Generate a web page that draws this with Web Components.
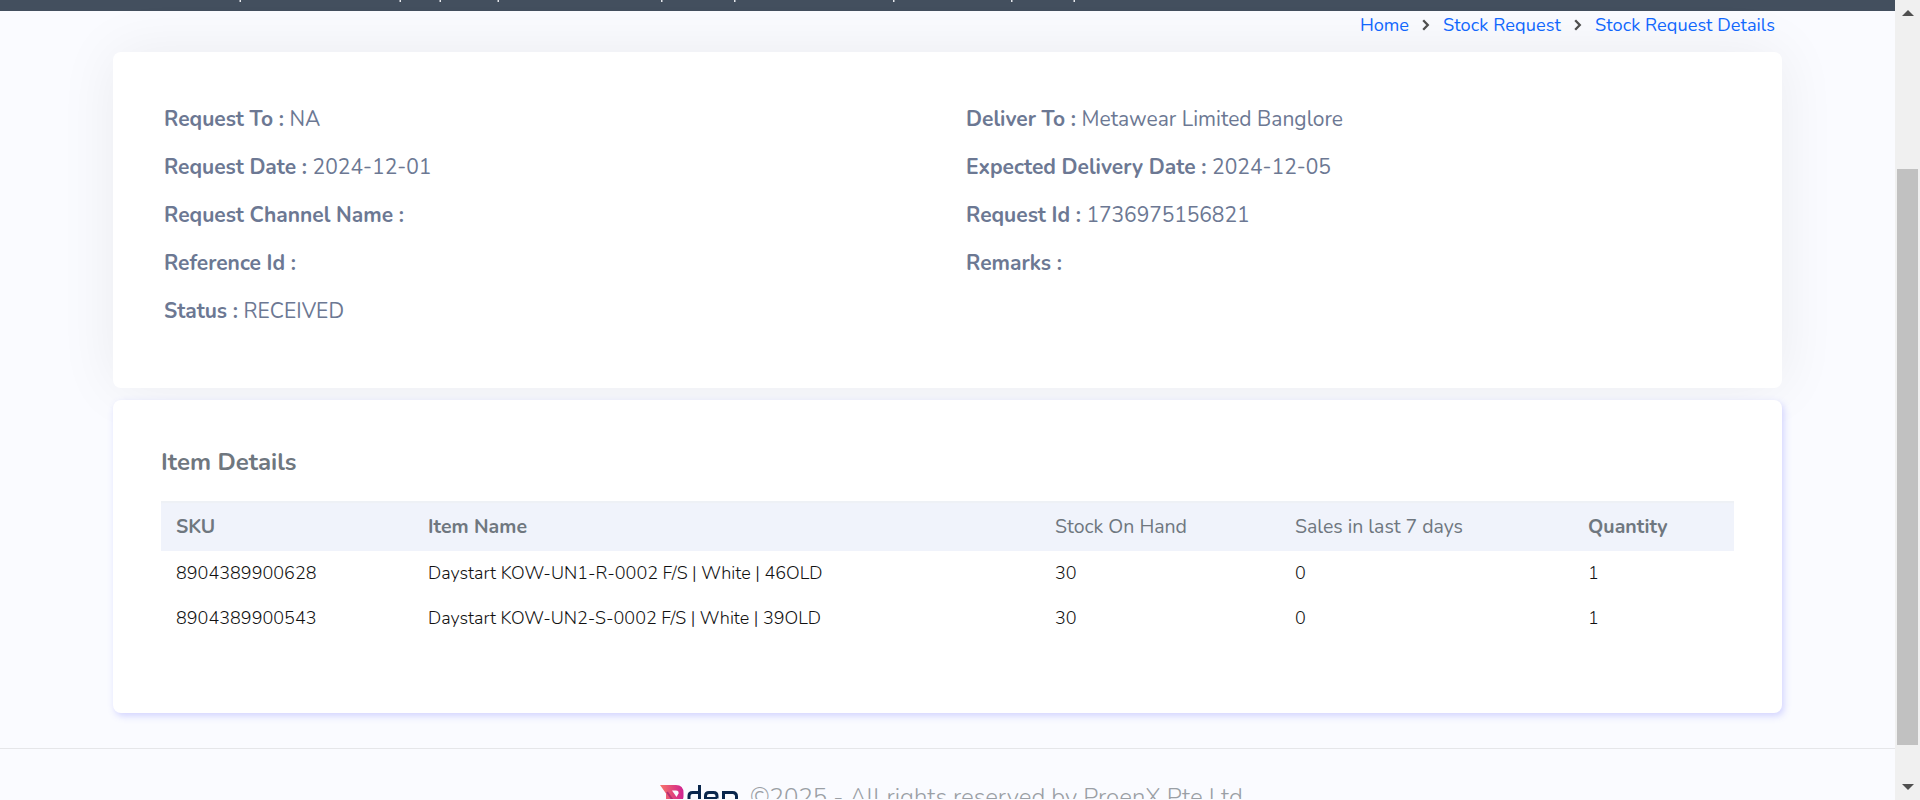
<!DOCTYPE html>
<html lang="en"><head><meta charset="utf-8"><title>Stock Request Details</title>
<style>
html,body{margin:0;height:100%;overflow:hidden}
body{font-family:Nunito,Lato,"Open Sans",sans-serif;background:#fafbff}
</style></head><body><stock-page></stock-page>
<script>
const define=(name,html,setup)=>customElements.define(name,class extends HTMLElement{
  connectedCallback(){
    if(this.shadowRoot)return;
    this.attachShadow({mode:'open'}).innerHTML=html;
    if(setup)setup(this,this.shadowRoot);
  }
});
// Single line of text tracked to occupy the width given in its "w" attribute.
define('fit-text','<style>:host{display:inline-block;white-space:pre}span{display:inline-block}</style><span><slot></slot></span>',(el,root)=>{
  const s=root.querySelector('span'),n=el.textContent.length,w=+el.getAttribute('w');
  if(w&&n>1){s.style.letterSpacing=((w-s.getBoundingClientRect().width)/n)+'px';}
});
define('nav-strip',`<style>:host{display:block;height:11px;background:#434f5e;flex:none}svg{display:block}</style>
<svg width="1895" height="11" fill="#e3e6ea"><path d="M239.500 0h1.500v2h-1.500zM399.500 0h1.500v2h-1.500zM439.500 0h1.500v2h-1.500zM497.500 0h1.500v2h-1.500zM661 0h1.500v2h-1.500zM734 0h1.500v2h-1.500zM893 0h1.500v2h-1.500zM1011 0h1.500v2h-1.500zM1073.500 0h1.500v2h-1.500z"/></svg>`);
define('bread-crumb',`<style>:host{display:flex;justify-content:flex-end;align-items:center;height:41px;box-sizing:border-box;padding:0 120px 13px 0;font-size:18.2px;line-height:22px;color:#1269ff;flex:none}
svg{display:block;margin:0 13px 0 13px}</style>
<fit-text w="49">Home</fit-text><svg width="8" height="12" fill="none" stroke="#505050" stroke-width="2.3"><path d="M1.200 1.200 5.800 6 1.200 10.800"/></svg><fit-text w="118">Stock Request</fit-text><svg width="8" height="12" fill="none" stroke="#505050" stroke-width="2.3"><path d="M1.200 1.200 5.800 6 1.200 10.800"/></svg><fit-text w="180">Stock Request Details</fit-text>`);
define('info-line',`<style>:host{display:flex;height:48px;line-height:48px;font-size:21px;font-weight:400;color:#6c7893;white-space:pre}b{font-weight:700}b{margin-right:5.5px}</style><b></b><span></span>`,(el,root)=>{
  const add=(sel,text,w)=>{const f=document.createElement('fit-text');f.setAttribute('w',w);f.textContent=text;root.querySelector(sel).append(f);};
  add('b',el.getAttribute('label')+' :',el.getAttribute('lw'));
  if(el.getAttribute('value'))add('span',el.getAttribute('value'),el.getAttribute('vw'));
});
define('info-card',`<style>:host{display:grid;grid-template-columns:802px 1fr;box-sizing:border-box;height:336px;margin:0 113px;padding:43px 51px 0;background:#fff;border-radius:8px;box-shadow:0 0 60px rgba(10,15,35,.065);flex:none}</style>
<div><info-line label="Request To" lw="120" value="NA" vw="31"></info-line>
<info-line label="Request Date" lw="143" value="2024-12-01" vw="119"></info-line>
<info-line label="Request Channel Name" lw="240"></info-line>
<info-line label="Reference Id" lw="132"></info-line>
<info-line label="Status" lw="74" value="RECEIVED" vw="100.5"></info-line></div>
<div><info-line label="Deliver To" lw="110" value="Metawear Limited Banglore" vw="261.500"></info-line>
<info-line label="Expected Delivery Date" lw="240.500" value="2024-12-05" vw="119"></info-line>
<info-line label="Request Id" lw="115" value="1736975156821" vw="163"></info-line>
<info-line label="Remarks" lw="96"></info-line></div>`);
define('item-table',`<style>:host{display:block}
.r{display:grid;grid-template-columns:252px 627px 240px 293px 1fr;padding-left:15px;height:45px;line-height:44px;font-size:18px;font-weight:300;color:#111}
.h{height:50px;line-height:52px;background:#f0f3fb;color:#6f777f;font-size:19.5px;font-weight:400;box-shadow:inset 0 3px 2px -1px #eef1f5}b{font-weight:700}</style>
<div class="r h"><b><fit-text w="39">SKU</fit-text></b><b><fit-text w="99">Item Name</fit-text></b><fit-text w="132">Stock On Hand</fit-text><fit-text w="168">Sales in last 7 days</fit-text><b><fit-text w="79.500">Quantity</fit-text></b></div>
<div class="r"><fit-text w="140.500">8904389900628</fit-text><fit-text w="394.500">Daystart KOW-UN1-R-0002 F/S | White | 46OLD</fit-text><fit-text w="21.600">30</fit-text><span>0</span><span>1</span></div>
<div class="r"><fit-text w="140.500">8904389900543</fit-text><fit-text w="393">Daystart KOW-UN2-S-0002 F/S | White | 39OLD</fit-text><fit-text w="21.600">30</fit-text><span>0</span><span>1</span></div>`);
define('item-card',`<style>:host{display:block;box-sizing:border-box;height:313px;margin:12px 113px 0;padding:44px 48px 0;background:#fff;border-radius:8px;box-shadow:2px 3px 7px rgba(105,108,255,.27);flex:none}
h2{margin:0 0 21px;font-size:24px;line-height:36px;font-weight:700;color:#6f777f}</style><h2><fit-text w="135.500">Item Details</fit-text></h2><item-table></item-table>`);
define('page-footer',`<style>:host{display:flex;box-sizing:border-box;flex:none;height:51px;margin-top:35px;border-top:1px solid #e5e6e9;padding:34px 0 0 660px;overflow:hidden;font-size:24px;line-height:28px;font-weight:300;color:#9a9fa5}svg{flex:none;margin-right:12px}</style>
<svg width="78" height="30" viewBox="0 0 78 30"><defs><linearGradient id="g"><stop offset="0" stop-color="#f7776c"/><stop offset=".55" stop-color="#e2457b"/><stop offset="1" stop-color="#cf2292"/></linearGradient></defs>
<path fill="url(#g)" d="M0 2h16q7.500 0 7.500 8v3q0 7-8 7H6V10.500z"/><path fill="#fafbff" d="M12 7.500h4q3 0 2.500 3l-2 3.500z"/><path d="m7 9 7 10" stroke="#b52f72" stroke-width="2"/>
<g fill="none" stroke="#09264c" stroke-width="3"><path d="M39.500 2v20H29V13q0-3.500 3.500-3.500h7M57 15.500H45.500V13q0-3.500 3.500-3.500h4.500q3.500 0 3.500 3.500v2.500M45.500 13v9h12M63.500 22V9.500h9q4 0 4 4V22"/></g></svg><fit-text w="498">©2025 - All rights reserved by ProenX Pte Ltd.</fit-text>`);
define('scroll-track',`<style>:host{display:flex;flex-direction:column;align-items:center;width:25px;background:#f0f0f0;flex:none}
svg{display:block}.t{width:21px;height:576px;background:#c1c1c1;margin:153px 0 39px}</style>
<svg width="12" height="16" fill="#505050"><path d="M0 16 6 10 12 16z"/></svg><div class="t"></div><svg width="12" height="6" fill="#505050"><path d="M0 0h12L6 6z"/></svg>`);
define('stock-page',`<style>:host{display:flex;width:1920px;height:800px;overflow:hidden;background:#fafbff}main{display:flex;flex-direction:column;width:1895px;height:800px;overflow:hidden}</style>
<main><nav-strip></nav-strip><bread-crumb></bread-crumb><info-card></info-card><item-card></item-card><page-footer></page-footer></main><scroll-track></scroll-track>`);
</script></body></html>
